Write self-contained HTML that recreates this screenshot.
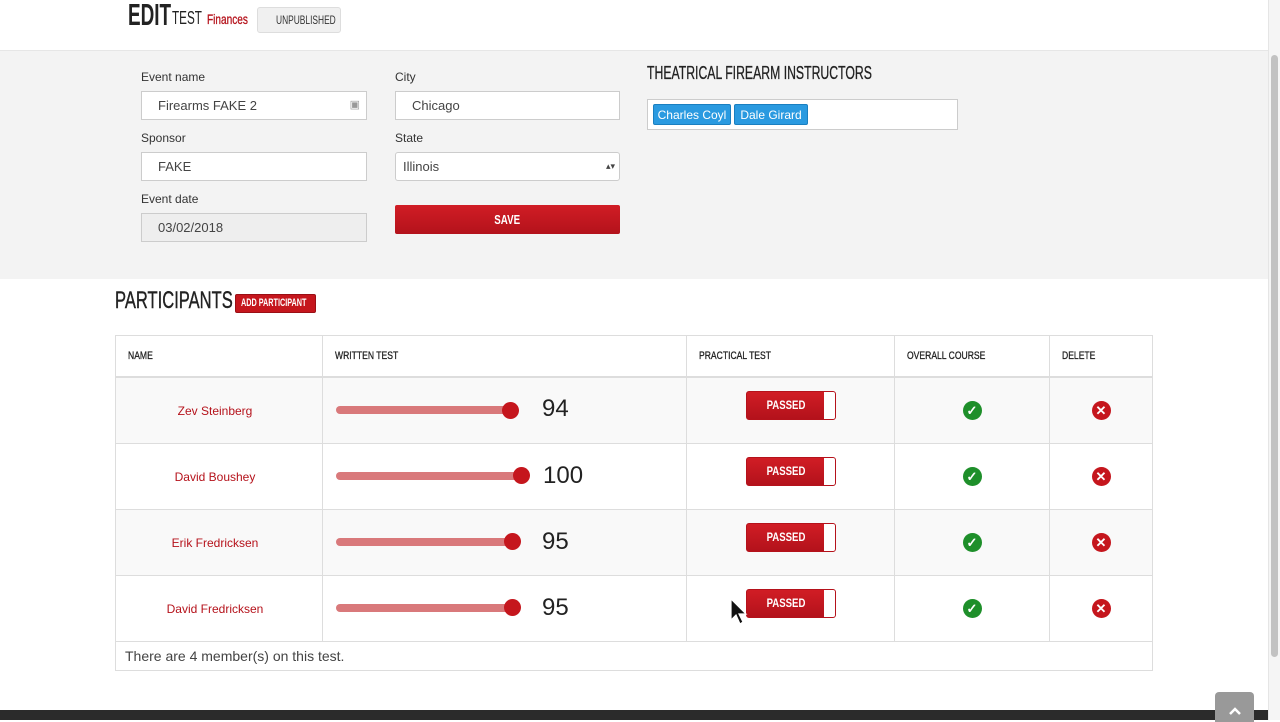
<!DOCTYPE html><html><head><style>
body{margin:0;width:1280px;height:720px;overflow:hidden;font-family:"Liberation Sans",sans-serif;background:#fff;position:relative;color:#333}
.c{font-family:"Liberation Sans Narrow","Liberation Sans",sans-serif;transform-origin:left;white-space:nowrap}
.abs{position:absolute}
.gray{position:absolute;left:0;top:50px;width:1268px;height:228px;background:#f3f3f3;border-top:1px solid #e6e6e6}
.lbl{position:absolute;font-size:12px;color:#333}
.inp{position:absolute;height:28px;background:#fff;border:1px solid #ccc;box-sizing:border-box;font-size:13px;line-height:26px;padding-left:16px;color:#444}
table{position:absolute;left:115px;top:335px;width:1038px;border-collapse:collapse}
td,th{border:1px solid #ddd;padding:0}
th{height:40px;text-align:left;padding-left:12px;font-weight:normal;font-size:11px;border-bottom:2px solid #ddd;color:#222}
th span{display:inline-block;transform:scaleX(.78);transform-origin:left;-webkit-text-stroke:.3px #222}
tr.r td{height:65px}
tr.r:nth-child(even) td{background:#f9f9f9}
.name{text-align:center;color:#b5121b;font-size:12px;padding-right:8px}
.sl{position:relative}
.track{position:absolute;left:13px;top:28px;height:8px;border-radius:4px;background:#d9797b}
.knob{position:absolute;top:23px;width:17px;height:17px;border-radius:50%;background:#c5161d}
.num{position:absolute;top:18px;font-size:24px;color:#222}
.pass{display:inline-block;width:90px;height:29px;border:1px solid #b5121b;border-radius:3px;background:linear-gradient(#d11d25,#b3121b);position:relative;box-sizing:border-box}
.pass span{position:absolute;left:0;width:78px;text-align:center;color:#fff;font-size:12px;font-weight:bold;line-height:27px;font-family:"Liberation Sans Narrow","Liberation Sans",sans-serif;transform:scaleX(.8)}
.pass i{position:absolute;right:0;top:0;width:11px;height:27px;background:#fff;border-radius:0 2px 2px 0}
.ic{width:19px;height:19px;border-radius:50%;display:inline-block;color:#fff;text-align:center;line-height:19px;font-size:13px;font-weight:bold}
</style></head><body>
<div class="abs c" style="left:128px;top:-3px;font-size:31px;font-weight:bold;color:#222;transform:scaleX(.61)">EDIT</div>
<div class="abs c" style="left:172px;top:8px;font-size:18px;color:#222;transform:scaleX(.65)">TEST</div>
<div class="abs c" style="left:207px;top:11px;font-size:14px;color:#b5121b;transform:scaleX(.72);-webkit-text-stroke:.3px #b5121b">Finances</div>
<div class="abs" style="left:257px;top:7px;width:84px;height:26px;background:#f0f0f0;border:1px solid #ddd;border-radius:3px;box-sizing:border-box"></div>
<div class="abs c" style="left:276px;top:13px;font-size:12px;color:#333;transform:scaleX(.7)">UNPUBLISHED</div>
<div class="gray"></div>
<div class="lbl" style="left:141px;top:70px">Event name</div>
<div class="inp" style="left:141px;top:91px;width:226px;height:29px;line-height:27px">Firearms FAKE 2<span style="position:absolute;right:6px;top:0;font-size:11px;color:#999">▣</span></div>
<div class="lbl" style="left:141px;top:131px">Sponsor</div>
<div class="inp" style="left:141px;top:152px;width:226px;height:29px;line-height:27px">FAKE</div>
<div class="lbl" style="left:141px;top:192px">Event date</div>
<div class="inp" style="left:141px;top:213px;width:226px;height:29px;line-height:27px;background:#eee">03/02/2018</div>
<div class="lbl" style="left:395px;top:70px">City</div>
<div class="inp" style="left:395px;top:91px;width:225px;height:29px;line-height:27px">Chicago</div>
<div class="lbl" style="left:395px;top:131px">State</div>
<div class="inp" style="left:395px;top:152px;width:225px;height:29px;line-height:27px;padding-left:7px;border-radius:3px">Illinois<span style="position:absolute;right:4px;top:0;font-size:9px">▴▾</span></div>
<div class="abs" style="left:395px;top:205px;width:225px;height:29px;background:linear-gradient(#d11d25,#b3121b);border-radius:2px;color:#fff;text-align:center;line-height:29px;font-size:13px;font-weight:bold"><span class="c" style="display:inline-block;transform:scaleX(.75);transform-origin:center">SAVE</span></div>
<div class="abs c" style="left:647px;top:63px;font-size:18px;color:#222;transform:scaleX(.68);-webkit-text-stroke:.3px #222">THEATRICAL FIREARM INSTRUCTORS</div>
<div class="abs" style="left:647px;top:99px;width:311px;height:31px;background:#fff;border:1px solid #ccc;box-sizing:border-box"></div>
<div class="abs" style="left:653px;top:104px;width:78px;height:21px;background:#2a9ae0;border:1px solid #1a7fc0;border-radius:2px;color:#fff;font-size:12px;line-height:20px;text-align:center;box-sizing:border-box">Charles Coyl</div>
<div class="abs" style="left:734px;top:104px;width:74px;height:21px;background:#2a9ae0;border:1px solid #1a7fc0;border-radius:2px;color:#fff;font-size:12px;line-height:20px;text-align:center;box-sizing:border-box">Dale Girard</div>
<div class="abs c" style="left:115px;top:287px;font-size:24px;color:#222;transform:scaleX(.69);-webkit-text-stroke:.4px #222">PARTICIPANTS</div>
<div class="abs" style="left:235px;top:294px;width:81px;height:19px;background:#c5161d;border:1px solid #9a0f15;border-radius:2px;box-sizing:border-box"></div>
<div class="abs c" style="left:241px;top:297px;font-size:11px;font-weight:bold;color:#fff;transform:scaleX(.66)">ADD PARTICIPANT</div>
<table>
<tr><th style="width:194px"><span>NAME</span></th><th style="width:351px"><span>WRITTEN TEST</span></th><th style="width:195px"><span>PRACTICAL TEST</span></th><th style="width:142px"><span>OVERALL COURSE</span></th><th><span>DELETE</span></th></tr>
<tr class="r"><td class="name">Zev Steinberg</td><td class="sl"><div class="track" style="width:180px"></div><div class="knob" style="left:179px;top:24px"></div><div class="num" style="left:219px;top:17px">94</div></td><td style="text-align:center"><div class="pass" style="margin-top:-6px"><span>PASSED</span><i></i></div></td><td style="text-align:center"><span class="ic" style="background:#1e8f2a">✓</span></td><td style="text-align:center"><span class="ic" style="background:#c5161d">✕</span></td></tr>
<tr class="r"><td class="name">David Boushey</td><td class="sl"><div class="track" style="width:190px"></div><div class="knob" style="left:190px"></div><div class="num" style="left:220px">100</div></td><td style="text-align:center"><div class="pass" style="margin-top:-6px"><span>PASSED</span><i></i></div></td><td style="text-align:center"><span class="ic" style="background:#1e8f2a">✓</span></td><td style="text-align:center"><span class="ic" style="background:#c5161d">✕</span></td></tr>
<tr class="r"><td class="name">Erik Fredricksen</td><td class="sl"><div class="track" style="width:182px"></div><div class="knob" style="left:181px"></div><div class="num" style="left:219px">95</div></td><td style="text-align:center"><div class="pass" style="margin-top:-6px"><span>PASSED</span><i></i></div></td><td style="text-align:center"><span class="ic" style="background:#1e8f2a">✓</span></td><td style="text-align:center"><span class="ic" style="background:#c5161d">✕</span></td></tr>
<tr class="r"><td class="name">David Fredricksen</td><td class="sl"><div class="track" style="width:182px"></div><div class="knob" style="left:181px"></div><div class="num" style="left:219px">95</div></td><td style="text-align:center"><div class="pass" style="margin-top:-6px"><span>PASSED</span><i></i></div></td><td style="text-align:center"><span class="ic" style="background:#1e8f2a">✓</span></td><td style="text-align:center"><span class="ic" style="background:#c5161d">✕</span></td></tr>
<tr><td colspan="5" style="height:28px;padding-left:9px;font-size:14px;color:#444">There are 4 member(s) on this test.</td></tr>
</table>
<div class="abs" style="left:0;top:710px;width:1268px;height:10px;background:#2b2b2b"></div>
<div class="abs" style="left:1215px;top:692px;width:39px;height:30px;background:#999;border-radius:4px 4px 0 0"></div>
<svg class="abs" style="left:1228px;top:706px" width="14" height="10" viewBox="0 0 14 10"><path d="M2 8 L7 3 L12 8" fill="none" stroke="#fff" stroke-width="2.5"/></svg>
<div class="abs" style="left:1268px;top:0;width:12px;height:720px;background:#f5f5f5;border-left:1px solid #e5e5e5"></div>
<div class="abs" style="left:1271px;top:55px;width:7px;height:602px;background:#c2c2c2;border-radius:4px"></div>
<svg class="abs" style="left:730px;top:598px" width="18" height="28" viewBox="0 0 18 28"><path d="M1 1 L1 22 L6 17 L10 26 L13 24 L9 16 L16 16 Z" fill="#111" stroke="#fff" stroke-width="1.2"/></svg>
</body></html>
